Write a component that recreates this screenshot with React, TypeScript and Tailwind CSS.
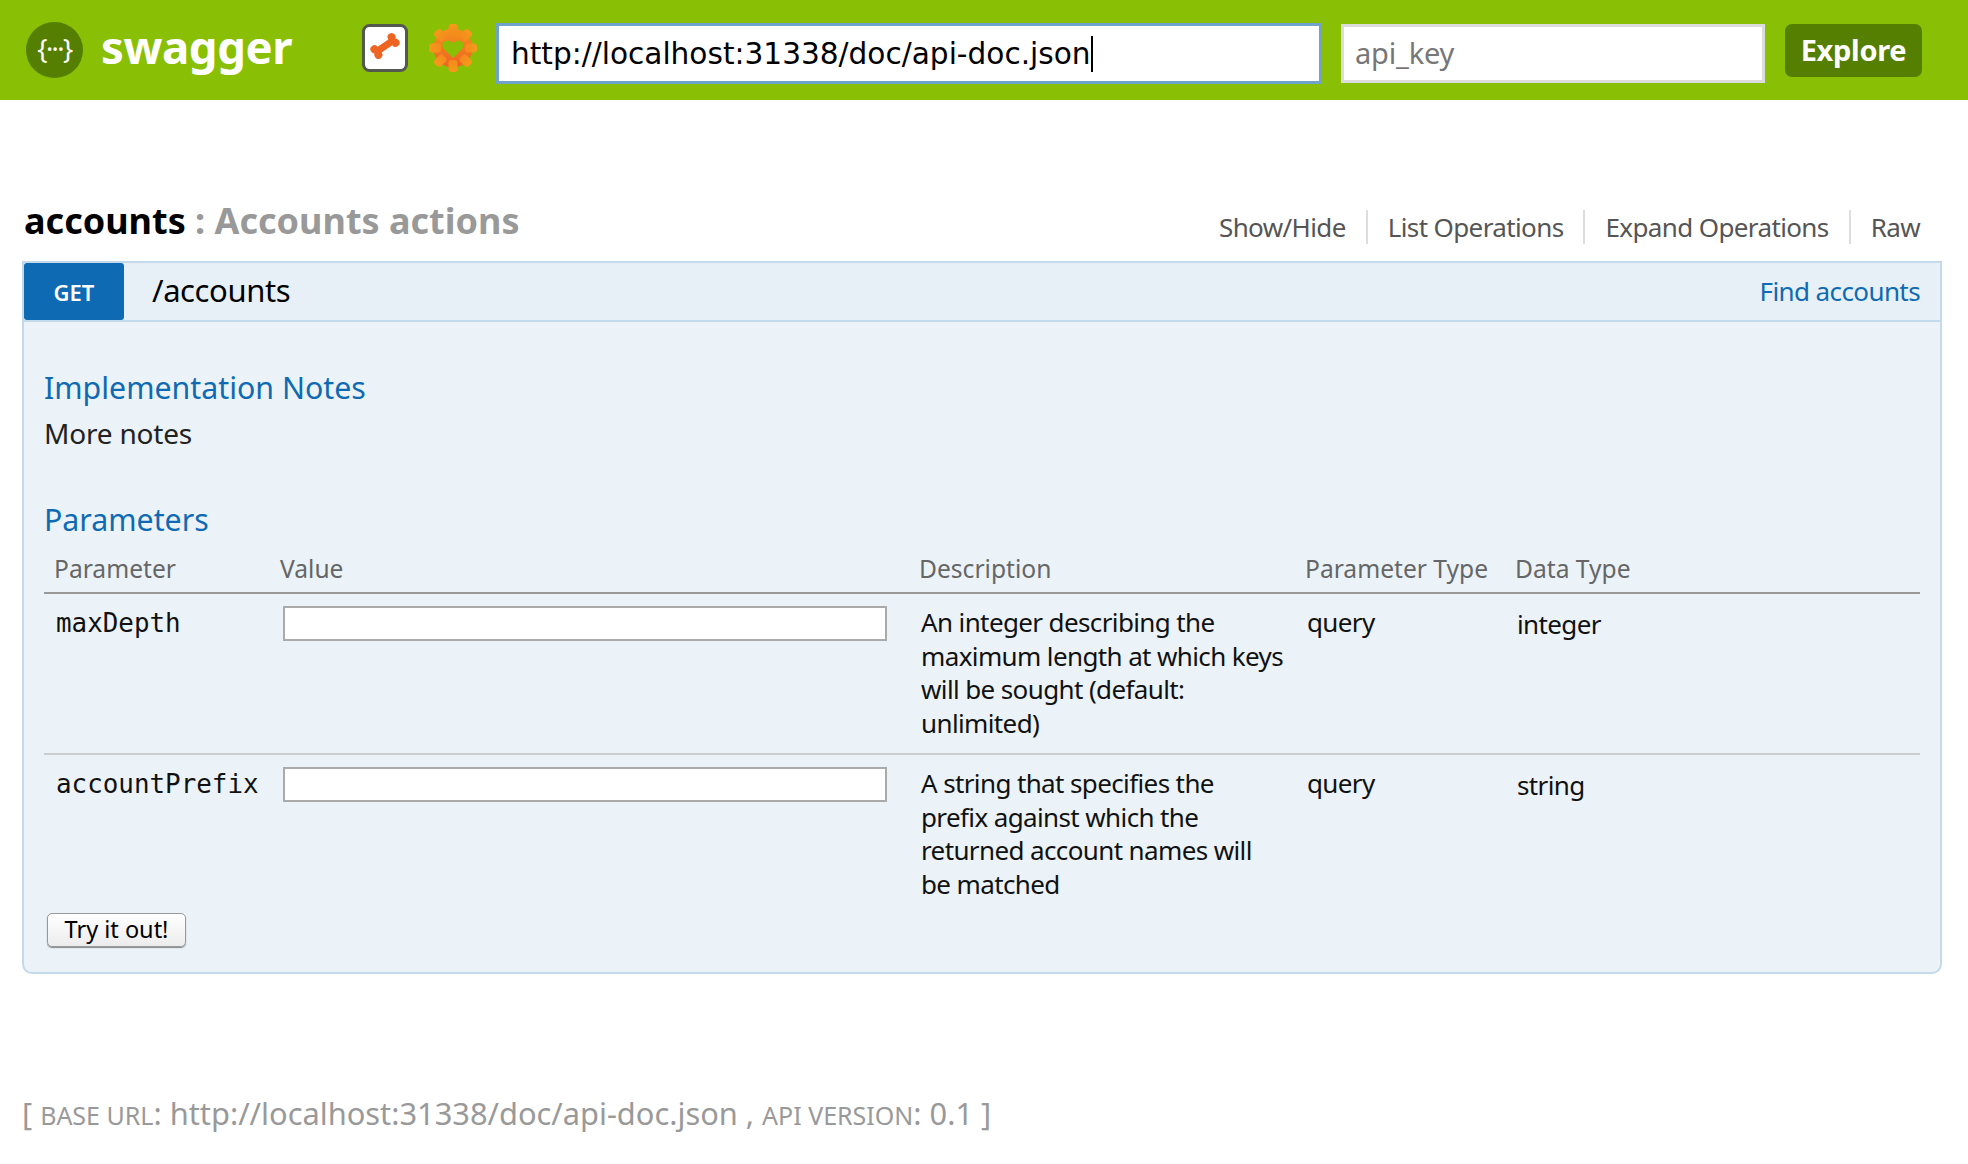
const sans = 'font-["Noto_Sans","Open_Sans",sans-serif]'

function BoneIcon() {
    return (
        <svg viewBox="0 0 46 48" className="h-[48px] w-[46px]">
            <rect x="1.5" y="1.5" width="43" height="45" rx="6" fill="#fff" stroke="#55584f" strokeWidth="3" />
            <g fill="#ee6423" transform="translate(23 22) rotate(-35)">
                <rect x="-10" y="-3.5" width="20" height="7" />
                <circle cx="-10.5" cy="-3.5" r="4" />
                <circle cx="-10.5" cy="3.5" r="4" />
                <circle cx="10.5" cy="-3.5" r="4" />
                <circle cx="10.5" cy="3.5" r="4" />
            </g>
        </svg>
    )
}

function GearIcon() {
    const angles = [0, 45, 90, 135, 180, 225, 270, 315]
    return (
        <svg viewBox="0 0 48 48" className="h-[48px] w-[48px]">
            <defs>
                <linearGradient id="gear" gradientUnits="userSpaceOnUse" x1="0" y1="0" x2="0" y2="48">
                    <stop offset="0" stopColor="#f59a1a" />
                    <stop offset="1" stopColor="#ee5a25" />
                </linearGradient>
                <mask id="gear-hole">
                    <rect width="48" height="48" fill="#fff" />
                    <path fill="#000" d="M24 34 L14.5 24.5 C10.5 19.5 17.5 13.5 24 19 C30.5 13.5 37.5 19.5 33.5 24.5 Z" />
                </mask>
            </defs>
            <g fill="url(#gear)" mask="url(#gear-hole)">
                <circle cx="24" cy="24" r="19.5" />
                {angles.map(a => (
                    <rect key={a} x="19.5" y="0" width="9" height="12" rx="3" transform={`rotate(${a} 24 24)`} />
                ))}
            </g>
        </svg>
    )
}

function Logo() {
    return (
        <div className="flex h-[56px] w-[57px] items-center justify-center rounded-full bg-[#547f00]">
            <span className="mt-[-4px] text-[27px] leading-none tracking-[-1.5px] text-white">{'{···}'}</span>
        </div>
    )
}

const params = [
    {
        name: 'maxDepth',
        lines: ['An integer describing the', 'maximum length at which keys', 'will be sought (default:', 'unlimited)'],
        type: 'integer',
    },
    {
        name: 'accountPrefix',
        lines: ['A string that specifies the', 'prefix against which the', 'returned account names will', 'be matched'],
        type: 'string',
    },
]

const links = ['Show/Hide', 'List Operations', 'Expand Operations', 'Raw']

export default function App() {
    return (
        <div className={`${sans} min-h-[1164px] bg-white`}>
            <header className="flex h-[100px] items-start bg-[#89bf04] pl-[26px] pt-[22px]">
                <Logo />
                <span className="ml-[18px] mt-[-6px] w-[261px] text-[45.5px] leading-[60px] font-bold tracking-[-0.4px] text-white">swagger</span>
                <div className="mt-[2px] flex gap-[21px]">
                    <BoneIcon />
                    <GearIcon />
                </div>
                <div className='ml-[19px] mt-[1px] flex h-[61px] w-[826px] items-center border-[3px] border-[#6fa3c9] bg-white pl-[12px] font-["DejaVu_Sans",sans-serif] text-[29.6px] text-black'>
                    <span className="mt-[1px]">http://localhost:31338/doc/api-doc.json</span>
                    <span className="h-[36px] w-[2px] bg-black" />
                </div>
                <div className="ml-[19px] mt-[2px] flex h-[59px] w-[424px] items-center border-[3px] border-[#dcdcdc] bg-white pb-[2px] pl-[11px] text-[29px] tracking-[-0.2px] text-[#777]">api_key</div>
                <button className="ml-[20px] mt-[2px] h-[53px] w-[137px] rounded-[7px] bg-[#547f00] pb-[2px] text-[29px] font-bold tracking-[-0.3px] text-white">Explore</button>
            </header>

            <main className="pl-[22px] pr-[26px]">
                <div className="flex h-[161px] items-end justify-between pb-[15px]">
                    <h2 className="pb-[1px] pl-[2px] text-[36px] leading-[48px] font-bold text-[#999]">
                        <span className="text-black">accounts</span> : Accounts actions
                    </h2>
                    <ul className="mr-[2px] flex h-[35px] items-center pb-[3px] text-[26px] tracking-[-0.62px] text-[#555]">
                        {links.map((l, i) => (
                            <li key={l} className={`flex h-[34px] items-center px-[20px] ${i < 3 ? 'border-r-2 border-[#ddd]' : ''}`}>{l}</li>
                        ))}
                    </ul>
                </div>

                <section className="h-[713px] rounded-b-[10px] border-2 border-[#c3d9ec] bg-[#ebf3f9]">
                    <div className="flex h-[59px] items-center justify-between border-b-2 border-[#c3d9ec] bg-[#e7f0f7] pr-[20px]">
                        <div className="flex items-center">
                            <span className="flex h-[57px] w-[100px] items-center justify-center rounded-[3px] bg-[#0f6ab4] pt-[2px] text-[22px] font-semibold text-white">GET</span>
                            <span className="ml-[28px] mb-[2px] text-[31px] tracking-[-0.4px] text-black">/accounts</span>
                        </div>
                        <span className="text-[26px] tracking-[-0.6px] text-[#0f6ab4]">Find accounts</span>
                    </div>

                    <div className="pl-[20px] pr-[20px]">
                        <h4 className="mt-[46px] text-[30.3px] leading-[40px] text-[#0f6ab4]">Implementation Notes</h4>
                        <p className="mt-[5px] text-[28px] leading-[40px] tracking-[-0.2px] text-[#222]">More notes</p>
                        <h4 className="mt-[47px] text-[30.3px] leading-[40px] text-[#0f6ab4]">Parameters</h4>

                        <div className="mt-[9px] grid h-[45px] grid-cols-[226px_639px_386px_210px_1fr] items-center border-b-2 border-[#999] pb-[3px] text-[24.6px] text-[#666]">
                            <span className="pl-[10px]">Parameter</span>
                            <span className="pl-[10px]">Value</span>
                            <span className="pl-[10px]">Description</span>
                            <span className="pl-[10px]">Parameter Type</span>
                            <span className="pl-[10px]">Data Type</span>
                        </div>

                        {params.map((p, i) => (
                            <div key={p.name} className={`grid grid-cols-[226px_639px_386px_210px_1fr] pt-[12px] text-[26px] leading-[33.5px] tracking-[-0.62px] text-[#111] ${i === 0 ? 'h-[161px] border-b-2 border-[#ccc]' : 'h-[158px]'}`}>
                                <span className='pl-[12px] pt-[1px] font-["DejaVu_Sans_Mono",monospace] text-[25.9px] tracking-normal'>{p.name}</span>
                                <div className="pl-[13px]">
                                    <input className="block h-[35px] w-[604px] border-2 border-[#aaa] bg-white" />
                                </div>
                                <div className="pl-[12px]">
                                    {p.lines.map(line => (
                                        <div key={line} className="whitespace-nowrap">{line}</div>
                                    ))}
                                </div>
                                <span className="pl-[12px]">query</span>
                                <span className="pl-[12px] pt-[2px]">{p.type}</span>
                            </div>
                        ))}

                        <button className="ml-[3px] h-[34px] w-[139px] rounded-[5px] border border-[#999] bg-[linear-gradient(#fff,#ececec)] text-[23.5px] leading-none text-black shadow-[0_1px_1px_#888]">Try it out!</button>
                    </div>
                </section>

                <div className="mt-[115px] text-[30.8px] leading-[48px] whitespace-nowrap text-[#999]">
                    [ <span className="text-[25px] uppercase">Base URL</span>: http://localhost:31338/doc/api-doc.json , <span className="text-[25px] uppercase">Api Version</span>: 0.1 ]
                </div>
            </main>
        </div>
    )
}
